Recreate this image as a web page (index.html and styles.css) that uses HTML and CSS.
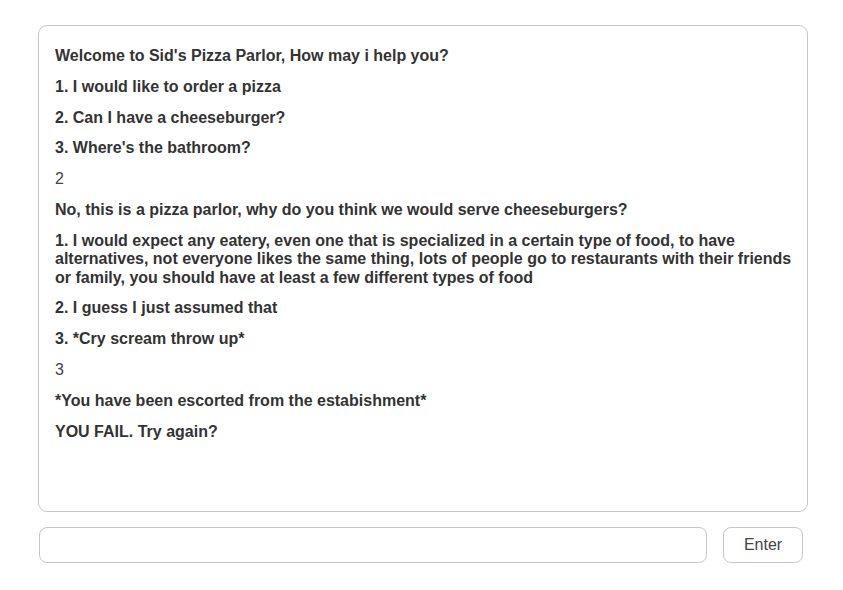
FILE: index.html
```html
<!DOCTYPE html>
<html>
<head>
<meta charset="utf-8">
<link rel="stylesheet" href="styles.css">
</head>
<body>
<div class="app">
  <div class="log">
    <p class="b">Welcome to Sid's Pizza Parlor, How may i help you?</p>
    <p class="b">1. I would like to order a pizza</p>
    <p class="b">2. Can I have a cheeseburger?</p>
    <p class="b">3. Where's the bathroom?</p>
    <p class="u">2</p>
    <p class="b">No, this is a pizza parlor, why do you think we would serve cheeseburgers?</p>
    <p class="b">1. I would expect any eatery, even one that is specialized in a certain type of food, to have alternatives, not everyone likes the same thing, lots of people go to restaurants with their friends or family, you should have at least a few different types of food</p>
    <p class="b">2. I guess I just assumed that</p>
    <p class="b">3. *Cry scream throw up*</p>
    <p class="u">3</p>
    <p class="b">*You have been escorted from the estabishment*</p>
    <p class="b">YOU FAIL. Try again?</p>
  </div>
  <div class="row">
    <input class="field" type="text">
    <button class="btn">Enter</button>
  </div>
</div>
</body>
</html>
```
FILE: styles.css
```css
html, body {
  margin: 0;
  padding: 0;
  background: #fff;
}
body {
  font-family: "Liberation Sans", Arial, sans-serif;
  font-size: 16px;
  color: #333;
}
.app {
  width: 770px;
  padding: 25px 0 0 38px;
}
.log {
  box-sizing: border-box;
  height: 487px;
  border: 1px solid #c6c6c6;
  border-radius: 9px;
  padding: 21px 8px 20px 16px;
}
.log p {
  margin: 0 0 12.4px;
  line-height: 18.4px;
}
.b {
  font-weight: bold;
}
.u {
  font-weight: normal;
  color: #444;
}
.row {
  display: flex;
  gap: 16px;
  margin-top: 15px;
  padding-left: 1px;
}
.field {
  box-sizing: border-box;
  width: 668px;
  height: 36px;
  border: 1px solid #c6c6c6;
  border-radius: 8px;
  margin: 0;
  outline: none;
}
.btn {
  box-sizing: border-box;
  width: 80px;
  height: 36px;
  border: 1px solid #c6c6c6;
  border-radius: 8px;
  background: #fff;
  font-family: "Liberation Sans", Arial, sans-serif;
  font-size: 16px;
  color: #444;
  margin: 0;
}
```
